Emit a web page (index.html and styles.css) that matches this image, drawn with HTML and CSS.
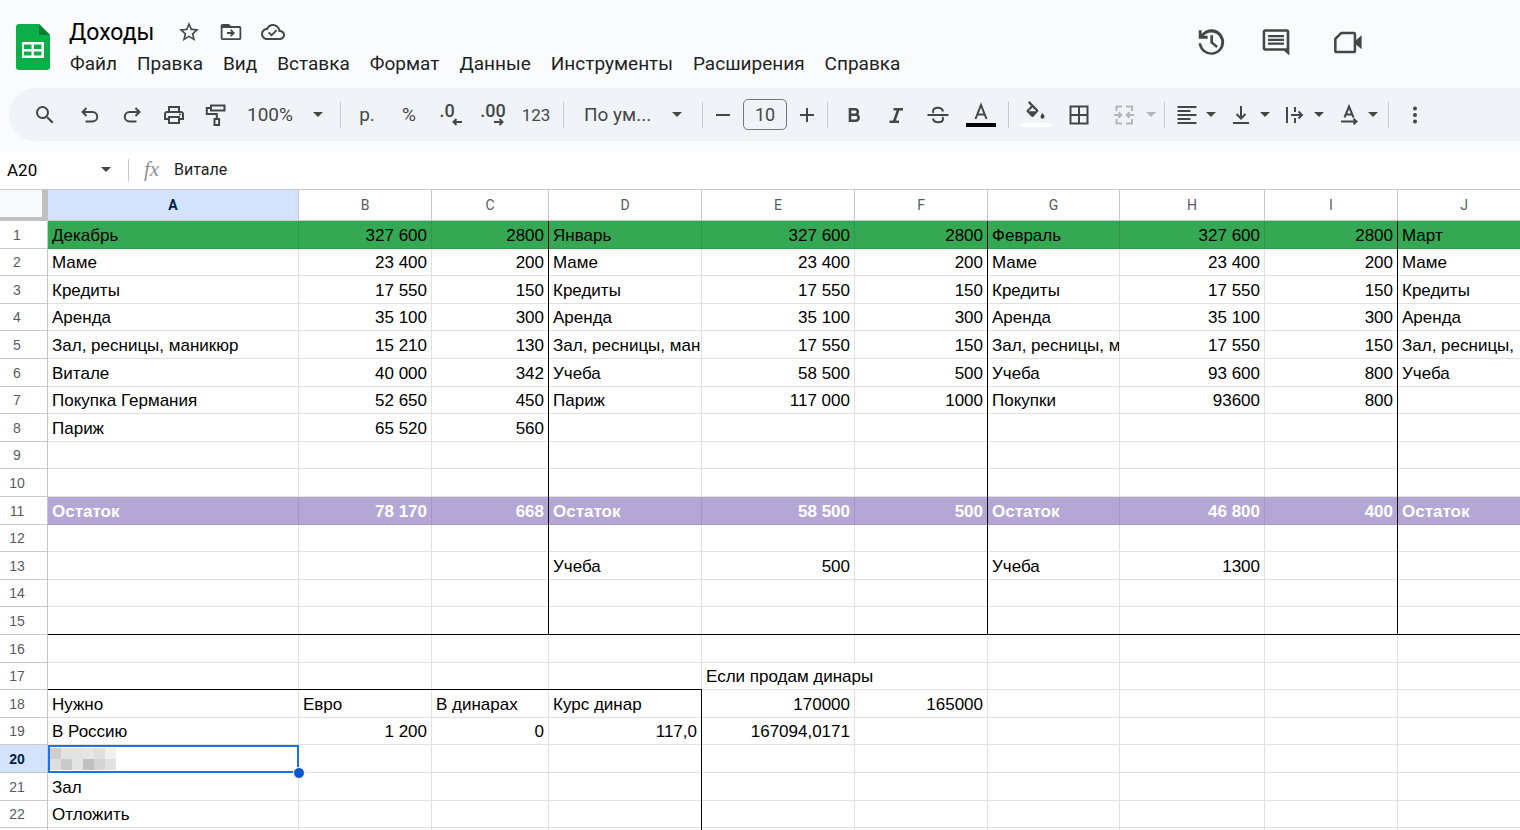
FILE: index.html
```html
<!DOCTYPE html>
<html lang="ru">
<head>
<meta charset="utf-8">
<title>Доходы</title>
<link rel="stylesheet" href="styles.css">
</head>
<body>
<div class="app">
  <header class="header">
    <svg class="logo" viewBox="0 0 34 46" aria-hidden="true"><path d="M3 0h20l11 11v32a3 3 0 0 1-3 3H3a3 3 0 0 1-3-3V3a3 3 0 0 1 3-3z" fill="#0cae4a"/><path d="M23 0l11 11H23z" fill="#078030"/><path d="M6 18h22v16H6zM8 20.500v4.500h7.500v-4.500zM18 20.500v4.500h7.500v-4.500zM8 27.500v4h7.500v-4zM18 27.500v4h7.500v-4z" fill="#fff" fill-rule="evenodd"/></svg>
    <div class="titles">
      <div class="title-row">
        <input class="doc-title" aria-label="Название" value="Доходы">
        <button class="title-btn" aria-label="Пометить"><svg class="icon" viewBox="0 0 24 24"><path d="M22 9.240l-7.190-.62L12 2 9.190 8.630 2 9.240l5.460 4.730L5.820 21 12 17.270 18.180 21l-1.630-7.030L22 9.240zM12 15.400l-3.760 2.270 1-4.280-3.320-2.880 4.380-.38L12 6.100l1.710 4.040 4.380.38-3.320 2.880 1 4.280L12 15.400z"/></svg></button>
        <button class="title-btn" aria-label="Переместить"><svg class="icon" viewBox="0 0 24 24"><path d="M20.500 6H12l-2-2H3.500A1.700 1.700 0 0 0 1.700 5.700v12.600A1.700 1.700 0 0 0 3.500 20h17a1.700 1.700 0 0 0 1.800-1.700V7.700A1.700 1.700 0 0 0 20.500 6zm0 12.200h-17V8h17zM12.200 16.800l-1.200-1.200 1.600-1.700H8v-1.800h4.600L11 10.400l1.200-1.200 3.800 3.800z"/></svg></button>
        <button class="title-btn" aria-label="Сохранено"><svg class="icon" viewBox="0 0 24 24"><path d="M19.350 10.040A7.490 7.490 0 0 0 12 4C9.110 4 6.600 5.640 5.350 8.040A5.994 5.994 0 0 0 0 14c0 3.310 2.690 6 6 6h13c2.760 0 5-2.240 5-5 0-2.640-2.050-4.780-4.650-4.960zM19 18H6c-2.210 0-4-1.790-4-4s1.790-4 4-4h.71C7.370 7.690 9.480 6 12 6c3.040 0 5.500 2.460 5.500 5.500v.5H19c1.660 0 3 1.340 3 3s-1.340 3-3 3zM10.500 16.500l-3.500-3.500 1.300-1.300 2.200 2.200 4.500-4.500 1.300 1.300z"/></svg></button>
      </div>
      <nav class="menu">
        <button>Файл</button><button>Правка</button><button>Вид</button><button>Вставка</button><button>Формат</button><button>Данные</button><button>Инструменты</button><button>Расширения</button><button>Справка</button>
      </nav>
    </div>
    <div class="actions">
      <button class="action" aria-label="История"><svg class="icon-lg" viewBox="0 0 24 24"><path d="M12.700 2.400A9.500 9.500 0 0 0 5 6V3.200H2.800V9.500h6.700V7.300H6.600A7.500 7.500 0 1 1 4.700 13H2.700a9.600 9.600 0 1 0 10-10.600zM11.500 7v5.800l4.500 3.700 1.200-1.500-3.700-3V7z"/></svg></button>
      <button class="action" aria-label="Комментарии"><svg class="icon-lg" viewBox="0 0 24 24"><path d="M20 2.500H4A2 2 0 0 0 2 4.500v12a2 2 0 0 0 2 2h14l4 3.700V4.500a2 2 0 0 0-2-2zM20 16.700H3.900V4.400H20zM6 12.400h12v1.700H6zM6 9.600h12v1.700H6zM6 6.800h12v1.700H6z"/></svg></button>
      <button class="action action-meet" aria-label="Видеовстреча"><svg class="icon-lg" viewBox="0 0 24 24"><path d="M7 5.200h9.200q1 0 1 1v12.300q0 1-1 1H3.500q-1 0-1-1V9.700z" fill="none" stroke="currentColor" stroke-width="1.900" stroke-linejoin="round"/><path d="M17.500 11l4.700-4v10.500l-4.700-4z"/></svg></button>
    </div>
  </header>

  <div class="toolbar" role="toolbar">
    <button class="tool tool-search" aria-label="Поиск"><svg class="icon" viewBox="0 0 24 24"><path d="M15.500 14h-.79l-.28-.27A6.471 6.471 0 0 0 16 9.500 6.500 6.500 0 1 0 9.500 16c1.610 0 3.090-.59 4.230-1.570l.27.28v.79l5 4.990L20.490 19l-4.990-5zm-6 0C7.010 14 5 11.990 5 9.500S7.010 5 9.500 5 14 7.010 14 9.500 11.990 14 9.500 14z"/></svg></button>
    <button class="tool" aria-label="Отменить"><svg class="icon" viewBox="0 0 24 24"><path d="M8.500 5L4.500 9l4 4M5 9h9.500a4.700 4.700 0 0 1 0 9.500H7.500" class="line"/></svg></button>
    <button class="tool" aria-label="Повторить"><svg class="icon" viewBox="0 0 24 24"><path d="M15.500 5l4 4-4 4M19 9H9.500a4.700 4.700 0 0 0 0 9.500h7" class="line"/></svg></button>
    <button class="tool" aria-label="Печать"><svg class="icon" viewBox="0 0 24 24"><path d="M19 8h-1V3H6v5H5c-1.660 0-3 1.340-3 3v6h4v4h12v-4h4v-6c0-1.660-1.340-3-3-3zM8 5h8v3H8V5zm8 12v2H8v-4h8v2zm2-2v-2H6v2H4v-4c0-.55.45-1 1-1h14c.55 0 1 .45 1 1v4h-2z"/><circle cx="18" cy="11.500" r="1"/></svg></button>
    <button class="tool" aria-label="Копировать форматирование"><svg class="icon" viewBox="0 0 24 24"><path d="M7 2.500h13.500v5H7zM7 5H2.800v6h10v4.500M10.500 16h4.600v6h-4.600z" class="line"/></svg></button>
    <label class="picker zoom-picker"><select aria-label="Масштаб"><option>100%</option></select><svg class="caret" viewBox="0 0 10 5"><path d="M0 0h10L5 5z"/></svg></label>
    <span class="sep"></span>
    <button class="tool fmt">р.</button>
    <button class="tool fmt">%</button>
    <button class="tool stacked fewer">.0<svg class="mini left" viewBox="0 0 10 8"><path d="M10 4H1.500M4.500 1l-3 3 3 3" class="line"/></svg></button>
    <button class="tool stacked">.00<svg class="mini right" viewBox="0 0 10 8"><path d="M0 4h8.500M5.500 1l3 3-3 3" class="line"/></svg></button>
    <button class="tool num">123</button>
    <span class="sep"></span>
    <label class="picker font-picker"><select aria-label="Шрифт"><option>По ум...</option></select><svg class="caret" viewBox="0 0 10 5"><path d="M0 0h10L5 5z"/></svg></label>
    <span class="sep"></span>
    <button class="tool step" aria-label="Меньше"><svg class="icon" viewBox="0 0 24 24"><path d="M5 12h14" class="line"/></svg></button>
    <input class="size-box" aria-label="Размер шрифта" value="10">
    <button class="tool step" aria-label="Больше"><svg class="icon" viewBox="0 0 24 24"><path d="M5 12h14M12 5v14" class="line"/></svg></button>
    <span class="sep"></span>
    <button class="tool" aria-label="Полужирный"><svg class="icon" viewBox="0 0 24 24"><path d="M8 6.200h5a2.700 2.700 0 0 1 0 5.500H8zM8 11.700h5.700a3 3 0 0 1 0 6H8z" fill="none" stroke="currentColor" stroke-width="2.600"/></svg></button>
    <button class="tool" aria-label="Курсив"><svg class="icon" viewBox="0 0 24 24"><path d="M9.500 6.200H19M5.500 18.700H15M14.500 6L10 18.800" fill="none" stroke="currentColor" stroke-width="2.600"/></svg></button>
    <button class="tool" aria-label="Зачеркнутый"><svg class="icon" viewBox="0 0 24 24"><path d="M1.500 12h21M17 8.500C16.500 5.800 14.500 4.700 12 4.700 9 4.700 7 6.200 7 8.200q0 1 .6 1.800M7 15.500c.5 2.500 2.500 3.800 5 3.800 3 0 5-1.500 5-3.500q0-1-.6-1.800" class="line"/></svg></button>
    <button class="tool tool-color" aria-label="Цвет текста"><svg class="icon-wide" viewBox="0 0 30 26"><path d="M9.500 17L15 3l5.500 14M11.500 12.500h7" class="line"/><path d="M0 21h30v4H0z" fill="#000"/></svg></button>
    <span class="sep"></span>
    <button class="tool tool-color" aria-label="Цвет заливки"><svg class="icon-wide" viewBox="0 0 30 26"><path d="M8.500-1l8.500 8.700q1 1 0 2L12.500 14.500q-1 1-2 0L6 10q-1-1 0-2l4-4-3-3.300zM11.500 5.400L7.700 9.200h7.600z" fill-rule="evenodd"/><path d="M21.500 11s-2 2.400-2 3.800a2 2 0 0 0 4 0c0-1.400-2-3.800-2-3.800z"/><path d="M0 21h30v4H0z" fill="#fff"/></svg></button>
    <button class="tool" aria-label="Границы"><svg class="icon" viewBox="0 0 24 24"><path d="M3.500 3.500h17v17h-17zM12 3.500v17M3.500 12h17" class="line"/></svg></button>
    <button class="combo disabled" aria-label="Объединить ячейки" disabled><svg class="icon" viewBox="0 0 24 24"><path d="M10 3.500H4.500V8M14 3.500h6V8M10 20.500H4.500V16M14 20.500h6V16M2 12h7M6.500 9.300L9.300 12l-2.800 2.700M22 12h-7M17.500 9.300L14.700 12l2.800 2.700" class="line"/></svg><svg class="caret" viewBox="0 0 10 5"><path d="M0 0h10L5 5z"/></svg></button>
    <span class="sep"></span>
    <button class="combo" aria-label="Выравнивание по горизонтали"><svg class="icon" viewBox="0 0 24 24"><path d="M2.500 4h19M2.500 8h13M2.500 12h19M2.500 16h13M2.500 20h19" class="line"/></svg><svg class="caret" viewBox="0 0 10 5"><path d="M0 0h10L5 5z"/></svg></button>
    <button class="combo" aria-label="Выравнивание по вертикали"><svg class="icon" viewBox="0 0 24 24"><path d="M12 3v12M7.500 11l4.500 4.500 4.500-4.500M4 20h16" class="line"/></svg><svg class="caret" viewBox="0 0 10 5"><path d="M0 0h10L5 5z"/></svg></button>
    <button class="combo" aria-label="Перенос текста"><svg class="icon" viewBox="0 0 24 24"><path d="M4 4v16M12 4v5M12 15v5M8 12h10.500M15.500 8.500L19 12l-3.500 3.500" class="line"/></svg><svg class="caret" viewBox="0 0 10 5"><path d="M0 0h10L5 5z"/></svg></button>
    <button class="combo" aria-label="Поворот текста"><svg class="icon" viewBox="0 0 24 24"><path d="M7.500 14.500L12 3.500l4.500 11M9 11.500h6M4 18.500h15M16.500 15.800l3 2.700-3 2.700" class="line"/></svg><svg class="caret" viewBox="0 0 10 5"><path d="M0 0h10L5 5z"/></svg></button>
    <span class="sep"></span>
    <button class="tool" aria-label="Ещё"><svg class="icon" viewBox="0 0 24 24"><circle cx="12" cy="5.500" r="2"/><circle cx="12" cy="12" r="2"/><circle cx="12" cy="18.500" r="2"/></svg></button>
  </div>

  <div class="formula-bar">
    <input class="name-box" aria-label="Диапазон" value="A20">
    <button class="name-caret" aria-label="Именованные диапазоны"><svg class="caret" viewBox="0 0 10 5"><path d="M0 0h10L5 5z"/></svg></button>
    <span class="bar-sep"></span>
    <label class="fx" for="formula">fx</label>
    <input class="formula" id="formula" value="Витале">
  </div>

  <main class="sheet">
    <table class="grid">
      <colgroup><col class="c-head"><col class="c-a"><col class="c-b"><col class="c-c"><col class="c-d"><col class="c-e"><col class="c-f"><col class="c-g"><col class="c-h"><col class="c-i"><col class="c-j"></colgroup>
      <thead>
        <tr><th class="corner"></th><th class="active">A</th><th>B</th><th>C</th><th>D</th><th>E</th><th>F</th><th>G</th><th>H</th><th>I</th><th>J</th></tr>
      </thead>
      <tbody>
        <tr class="blocks green"><th>1</th><td>Декабрь</td><td class="n">327 600</td><td class="n">2800</td><td>Январь</td><td class="n">327 600</td><td class="n">2800</td><td>Февраль</td><td class="n">327 600</td><td class="n">2800</td><td>Март</td></tr>
        <tr class="blocks"><th>2</th><td>Маме</td><td class="n">23 400</td><td class="n">200</td><td>Маме</td><td class="n">23 400</td><td class="n">200</td><td>Маме</td><td class="n">23 400</td><td class="n">200</td><td>Маме</td></tr>
        <tr class="blocks"><th>3</th><td>Кредиты</td><td class="n">17 550</td><td class="n">150</td><td>Кредиты</td><td class="n">17 550</td><td class="n">150</td><td>Кредиты</td><td class="n">17 550</td><td class="n">150</td><td>Кредиты</td></tr>
        <tr class="blocks"><th>4</th><td>Аренда</td><td class="n">35 100</td><td class="n">300</td><td>Аренда</td><td class="n">35 100</td><td class="n">300</td><td>Аренда</td><td class="n">35 100</td><td class="n">300</td><td>Аренда</td></tr>
        <tr class="blocks"><th>5</th><td>Зал, ресницы, маникюр</td><td class="n">15 210</td><td class="n">130</td><td><div class="clip">Зал, ресницы, маникюр</div></td><td class="n">17 550</td><td class="n">150</td><td><div class="clip">Зал, ресницы, маникюр</div></td><td class="n">17 550</td><td class="n">150</td><td>Зал, ресницы,</td></tr>
        <tr class="blocks"><th>6</th><td>Витале</td><td class="n">40 000</td><td class="n">342</td><td>Учеба</td><td class="n">58 500</td><td class="n">500</td><td>Учеба</td><td class="n">93 600</td><td class="n">800</td><td>Учеба</td></tr>
        <tr class="blocks"><th>7</th><td>Покупка Германия</td><td class="n">52 650</td><td class="n">450</td><td>Париж</td><td class="n">117 000</td><td class="n">1000</td><td>Покупки</td><td class="n">93600</td><td class="n">800</td><td></td></tr>
        <tr class="blocks"><th>8</th><td>Париж</td><td class="n">65 520</td><td class="n">560</td><td></td><td></td><td></td><td></td><td></td><td></td><td></td></tr>
        <tr class="blocks"><th>9</th><td></td><td></td><td></td><td></td><td></td><td></td><td></td><td></td><td></td><td></td></tr>
        <tr class="blocks"><th>10</th><td></td><td></td><td></td><td></td><td></td><td></td><td></td><td></td><td></td><td></td></tr>
        <tr class="blocks purple"><th>11</th><td>Остаток</td><td class="n">78 170</td><td class="n">668</td><td>Остаток</td><td class="n">58 500</td><td class="n">500</td><td>Остаток</td><td class="n">46 800</td><td class="n">400</td><td>Остаток</td></tr>
        <tr class="blocks"><th>12</th><td></td><td></td><td></td><td></td><td></td><td></td><td></td><td></td><td></td><td></td></tr>
        <tr class="blocks"><th>13</th><td></td><td></td><td></td><td>Учеба</td><td class="n">500</td><td></td><td>Учеба</td><td class="n">1300</td><td></td><td></td></tr>
        <tr class="blocks"><th>14</th><td></td><td></td><td></td><td></td><td></td><td></td><td></td><td></td><td></td><td></td></tr>
        <tr class="blocks closing"><th>15</th><td></td><td></td><td></td><td></td><td></td><td></td><td></td><td></td><td></td><td></td></tr>
        <tr><th>16</th><td></td><td></td><td></td><td></td><td></td><td></td><td></td><td></td><td></td><td></td></tr>
        <tr><th>17</th><td class="under"></td><td class="under"></td><td class="under"></td><td class="under"></td><td colspan="2">Если продам динары</td><td></td><td></td><td></td><td></td></tr>
        <tr class="plan"><th>18</th><td>Нужно</td><td>Евро</td><td>В динарах</td><td>Курс динар</td><td class="n">170000</td><td class="n">165000</td><td></td><td></td><td></td><td></td></tr>
        <tr class="plan"><th>19</th><td>В Россию</td><td class="n">1 200</td><td class="n">0</td><td class="n">117,0</td><td class="n">167094,0171</td><td></td><td></td><td></td><td></td><td></td></tr>
        <tr class="plan"><th class="active">20</th><td class="selected"><svg class="mosaic" viewBox="0 0 66 22" aria-hidden="true"><path fill="#cecece" d="M0 0h11v11H0z"/><path fill="#e3e3e3" d="M11 0h22v11H11z"/><path fill="#e6e6e6" d="M33 0h11v11H33z"/><path fill="#e0e0e0" d="M44 0h11v11H44z"/><path fill="#f0f0f0" d="M55 0h11v11H55z"/><path fill="#dedede" d="M0 11h11v11H0z"/><path fill="#cacaca" d="M11 11h11v11H11z"/><path fill="#e2e4e3" d="M22 11h11v11H22z"/><path fill="#c0c0c0" d="M33 11h11v11H33z"/><path fill="#d5d5d5" d="M44 11h11v11H44z"/><path fill="#e2e2e2" d="M55 11h11v11H55z"/></svg><span class="handle"></span></td><td></td><td></td><td></td><td></td><td></td><td></td><td></td><td></td><td></td></tr>
        <tr class="plan"><th>21</th><td>Зал</td><td></td><td></td><td></td><td></td><td></td><td></td><td></td><td></td><td></td></tr>
        <tr class="plan"><th>22</th><td>Отложить</td><td></td><td></td><td></td><td></td><td></td><td></td><td></td><td></td><td></td></tr>
        <tr class="plan"><th></th><td></td><td></td><td></td><td></td><td></td><td></td><td></td><td></td><td></td><td></td></tr>
      </tbody>
    </table>
  </main>
</div>
</body>
</html>
```
FILE: styles.css
```css
* { box-sizing: border-box; }

body {
  margin: 0;
  background: #f9fbfd;
  color: #1f1f1f;
  font-family: Roboto, "Noto Sans", sans-serif;
}

button, input, select {
  margin: 0;
  padding: 0;
  border: 0;
  background: transparent;
  color: inherit;
  font: inherit;
  outline: none;
}

svg { display: block; fill: currentColor; flex: none; }
.line { fill: none; stroke: currentColor; stroke-width: 2; }
.icon { width: 24px; height: 24px; }
.icon-lg { width: 32px; height: 32px; }
.icon-wide { width: 30px; height: 26px; overflow: visible; }
.caret { width: 10px; height: 5px; }

.app { display: flex; flex-direction: column; height: 100vh; overflow: hidden; }

/* Header */
.header { display: flex; padding: 16px 0 8px 16px; height: 88px; flex: none; }
.logo { width: 34px; height: 46px; margin-top: 8px; }
.titles { margin-left: 10px; }
.title-row { display: flex; align-items: center; height: 32px; }
.doc-title { width: 108px; padding-left: 9px; font-size: 23px; color: #000; }
.title-btn { width: 42px; display: flex; justify-content: center; color: #444746; }
.menu { display: flex; height: 30px; }
.menu button { padding: 0 10px; font-size: 19px; color: #1f1f1f; }
.actions { display: flex; margin: 10px 133px 0 auto; height: 32px; color: #444746; }
.action { width: 65px; display: flex; justify-content: center; }
.action-meet { width: 79px; }

/* Toolbar */
.toolbar {
  display: flex;
  align-items: center;
  flex: none;
  height: 53px;
  margin-left: 9px;
  padding-left: 12px;
  border-radius: 27px 0 0 27px;
  background: #f0f3f8;
  color: #444746;
}
.tool { width: 42px; height: 38px; flex: none; display: flex; align-items: center; justify-content: center; }
.tool-search { width: 48px; }
.tool-color { width: 44px; }
.fmt { font-size: 19px; }
.num { width: 44px; font-size: 17px; }
.stacked { position: relative; padding-bottom: 8px; font-size: 18px; font-weight: 500; }
.fewer { padding-right: 8px; }
.mini { position: absolute; bottom: 8px; width: 10px; height: 8px; }
.mini.left { right: 10px; }
.mini.right { right: 10px; }
.step { width: 30px; }
.sep { width: 1px; height: 26px; margin: 0 5px; flex: none; background: #c7cacd; }
.picker { position: relative; display: flex; align-items: center; flex: none; height: 38px; }
.picker select { appearance: none; width: 100%; font-size: 19px; }
.picker .caret { position: absolute; right: 12px; }
.zoom-picker { width: 98px; padding-left: 10px; }
.font-picker { width: 128px; padding-left: 15px; }
.font-picker .caret { right: 15px; }
.size-box {
  width: 44px;
  height: 31px;
  margin: 0 5px;
  border: 1px solid #747775;
  border-radius: 5px;
  text-align: center;
  font-size: 18px;
}
.combo { width: 54px; height: 38px; flex: none; display: flex; align-items: center; gap: 7px; padding-left: 5px; }
.combo + .sep { margin-left: 2px; }
.combo.disabled { width: 62px; gap: 10px; padding-left: 12px; color: #b3b6b9; }

/* Formula bar */
.formula-bar { display: flex; align-items: center; flex: none; height: 37px; margin-top: 11px; padding-bottom: 2px; background: #fff; }
.name-box { width: 94px; padding-left: 7px; font-size: 17px; color: #000; }
.name-caret { width: 24px; height: 24px; display: flex; align-items: center; justify-content: center; color: #444746; }
.bar-sep { width: 1px; height: 22px; margin: 0 15px 0 10px; background: #c7cacd; }
.fx { width: 30px; font: italic 21px "Liberation Serif", serif; color: #8f9295; }
.formula { flex: 1; font-size: 16px; }

/* Grid */
.sheet { flex: 1; overflow: hidden; background: #fff; border-top: 1px solid #c7c9cb; }
.grid {
  table-layout: fixed;
  width: 0;
  border-spacing: 0;
  font-family: "Liberation Sans", Arial, sans-serif;
  font-size: 17px;
  line-height: 20px;
  color: #000;
}
.c-head { width: 48px; }
.c-a { width: 251px; }
.c-b, .c-f, .c-i, .c-j { width: 133px; }
.c-c { width: 117px; }
.c-d, .c-e { width: 153px; }
.c-g { width: 132px; }
.c-h { width: 145px; }

.grid th {
  padding: 0;
  border: solid #c7c9cb;
  border-width: 0 1px 1px 0;
  font-size: 14px;
  font-weight: 400;
  color: #575b5f;
}
.grid thead th { height: 31px; font-family: Roboto, sans-serif; }
.grid tbody th { padding-right: 13px; }
.grid th.active { background: #d3e3fd; color: #041e49; font-weight: 700; }
.grid .corner { background: #f8f9fa; border-width: 0 6px 4px 0; border-color: #c0c0c0; }

.grid tbody tr { height: 28px; }
.grid tbody tr:nth-child(5n+2), .grid tbody tr:nth-child(5n+4) { height: 27px; }

/* Gridlines are inset shadows, so that crossing lines join cleanly */
.grid td {
  --right: #e1e1e1;
  --bottom: #e1e1e1;
  padding: 0 5px 3px 4px;
  box-shadow: inset -1px 0 var(--right), inset 0 -1px var(--bottom);
  vertical-align: bottom;
  white-space: nowrap;
}
.grid .n { text-align: right; }
.clip { overflow: hidden; margin-right: -4px; }

.grid .green td { --right: #2f984b; --bottom: #2f984b; background: #34a853; }
.grid .purple td { --right: #a297c1; --bottom: #a297c1; background: #b4a7d6; color: #fff; font-weight: 700; }
.grid .blocks td:nth-child(4), .grid .blocks td:nth-child(7), .grid .blocks td:nth-child(10) { --right: #000; }
.grid .plan td:nth-child(5) { --right: #000; }
.grid .closing td, .grid .under {
  --bottom: #000;
  box-shadow: inset 0 -1px var(--bottom), inset -1px 0 var(--right);
}

.grid .selected { position: relative; padding: 0 2px; vertical-align: middle; outline: 2px solid #1a73e8; outline-offset: -2px; }
.mosaic { width: 66px; height: 22px; }
.handle {
  position: absolute;
  right: -6px;
  bottom: -6px;
  width: 12px;
  height: 12px;
  border: 1px solid #fff;
  border-radius: 50%;
  background: #0b57d0;
}
```
